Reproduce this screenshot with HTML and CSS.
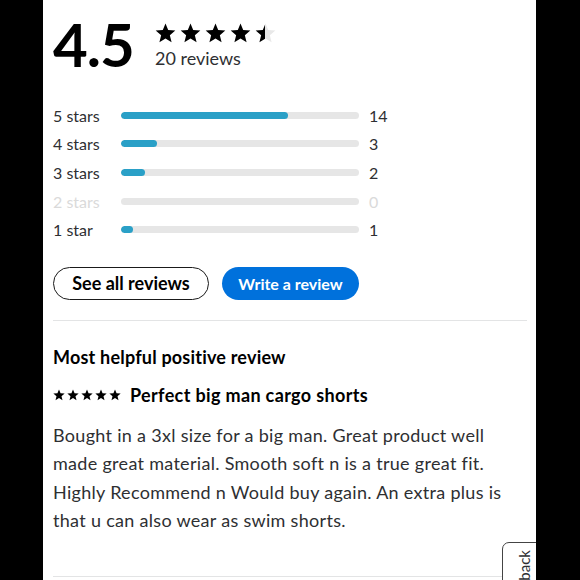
FILE: index.html
```html
<!DOCTYPE html>
<html>
<head>
<meta charset="utf-8">
<link rel="stylesheet" href="styles.css">
</head>
<body>
<svg width="0" height="0" class="defs">
  <defs>
    <symbol id="star" viewBox="0 0 24 23">
      <path d="M12 0.5l3.1 7.6 8.2 0.6-6.3 5.3 2 8-7-4.3-7 4.3 2-8L0.7 8.7l8.2-0.6z"/>
    </symbol>
    <linearGradient id="half" x1="0" x2="1" y1="0" y2="0">
      <stop offset="0.5" stop-color="#000"/>
      <stop offset="0.5" stop-color="#e8e8e8"/>
    </linearGradient>
  </defs>
</svg>
<div class="page">
  <div class="summary">
    <div class="score">4.5</div>
    <div class="summary-side">
      <div class="stars-big">
        <svg class="sb"><use href="#star"/></svg>
        <svg class="sb"><use href="#star"/></svg>
        <svg class="sb"><use href="#star"/></svg>
        <svg class="sb"><use href="#star"/></svg>
        <svg class="sb half"><use href="#star"/></svg>
      </div>
      <div class="count">20 reviews</div>
    </div>
  </div>

  <div class="dist">
    <div class="row"><span class="lbl">5 stars</span><span class="track"><span class="fill" style="width:70%"></span></span><span class="num">14</span></div>
    <div class="row"><span class="lbl">4 stars</span><span class="track"><span class="fill" style="width:15%"></span></span><span class="num">3</span></div>
    <div class="row"><span class="lbl">3 stars</span><span class="track"><span class="fill" style="width:10%"></span></span><span class="num">2</span></div>
    <div class="row muted"><span class="lbl">2 stars</span><span class="track"><span class="fill" style="width:0%"></span></span><span class="num">0</span></div>
    <div class="row"><span class="lbl">1 star</span><span class="track"><span class="fill" style="width:5%"></span></span><span class="num">1</span></div>
  </div>

  <div class="buttons">
    <button class="btn btn-outline">See all reviews</button>
    <button class="btn btn-blue">Write a review</button>
  </div>

  <hr class="divider">

  <h2 class="helpful">Most helpful positive review</h2>
  <div class="review-title">
    <span class="stars-small">
      <svg class="ss"><use href="#star"/></svg>
      <svg class="ss"><use href="#star"/></svg>
      <svg class="ss"><use href="#star"/></svg>
      <svg class="ss"><use href="#star"/></svg>
      <svg class="ss"><use href="#star"/></svg>
    </span>
    <span class="title-text">Perfect big man cargo shorts</span>
  </div>
  <p class="body">Bought in a 3xl size for a big man. Great product well made great material. Smooth soft n is a true great fit. Highly Recommend n Would buy again. An extra plus is that u can also wear as swim shorts.</p>

  <hr class="divider bottom">

  <div class="feedback"><span class="fb-text">Feedback</span></div>
</div>
</body>
</html>
```
FILE: styles.css
```css
html, body {
  margin: 0;
  padding: 0;
  background: #000;
}
.defs {
  position: absolute;
  width: 0;
  height: 0;
}
.page {
  position: relative;
  margin-left: 43px;
  width: 493px;
  height: 580px;
  overflow: hidden;
  background: #fff;
  box-sizing: border-box;
  padding: 0 9px 0 10px;
  font-family: Lato, "Open Sans", sans-serif;
  color: #2e2f32;
}
.summary {
  display: flex;
  align-items: flex-start;
  padding-top: 14px;
}
.score {
  font-size: 60px;
  font-weight: 700;
  line-height: 60px;
  color: #000;
  letter-spacing: -1px;
  width: 102px;
}
.summary-side {
  display: flex;
  flex-direction: column;
  padding-top: 9px;
}
.stars-big {
  display: flex;
  gap: 4px;
  height: 21px;
}
.sb {
  width: 21px;
  height: 20px;
  fill: #000;
}
.sb.half {
  fill: url(#half);
}
.count {
  font-size: 18px;
  line-height: 22px;
  margin-top: 3px;
}
.dist {
  display: flex;
  flex-direction: column;
  margin-top: 27px;
}
.row {
  display: flex;
  align-items: center;
  height: 28.6px;
  font-size: 16px;
}
.row.muted {
  color: #dadada;
}
.lbl {
  width: 68px;
}
.track {
  width: 238px;
  height: 7px;
  border-radius: 4px;
  background: #e6e6e6;
  overflow: hidden;
  display: flex;
}
.fill {
  background: #2aa0c7;
  border-radius: 4px;
  height: 100%;
}
.num {
  margin-left: 10px;
}
.buttons {
  display: flex;
  gap: 13px;
  margin-top: 23px;
}
.btn {
  font-family: Lato, "Open Sans", sans-serif;
  font-weight: 700;
  font-size: 18px;
  height: 33px;
  border-radius: 17px;
  padding: 0;
  box-sizing: border-box;
}
.btn-outline {
  width: 156px;
  background: #fff;
  border: 1px solid #1a1a1a;
  color: #000;
}
.btn-blue {
  width: 137px;
  background: #0071dc;
  border: none;
  color: #fff;
  font-size: 16px;
}
.divider {
  border: none;
  border-top: 1px solid #e3e4e5;
  margin: 20px 0 0;
}
.helpful {
  font-size: 18px;
  letter-spacing: 0.2px;
  font-weight: 700;
  color: #000;
  margin: 25px 0 0;
  line-height: 22px;
}
.review-title {
  display: flex;
  align-items: center;
  gap: 9px;
  margin-top: 16px;
  height: 22px;
}
.stars-small {
  display: flex;
  gap: 2px;
}
.ss {
  width: 12px;
  height: 12px;
  fill: #000;
}
.title-text {
  font-size: 18px;
  letter-spacing: 0.35px;
  font-weight: 700;
  color: #000;
}
.body {
  font-size: 18px;
  letter-spacing: 0.3px;
  line-height: 28.5px;
  margin: 15px 0 0;
  width: 462px;
}
.divider.bottom {
  margin-top: 41px;
}
.feedback {
  position: absolute;
  left: 459px;
  top: 542px;
  width: 40px;
  height: 80px;
  border: 1px solid #444;
  border-radius: 7px 0 0 0;
  background: #fff;
  box-sizing: border-box;
}
.fb-text {
  position: absolute;
  left: 12px;
  top: 7px;
  writing-mode: vertical-rl;
  transform: rotate(180deg);
  font-size: 15px;
  line-height: 18px;
  color: #2e2f32;
  white-space: nowrap;
}
```
